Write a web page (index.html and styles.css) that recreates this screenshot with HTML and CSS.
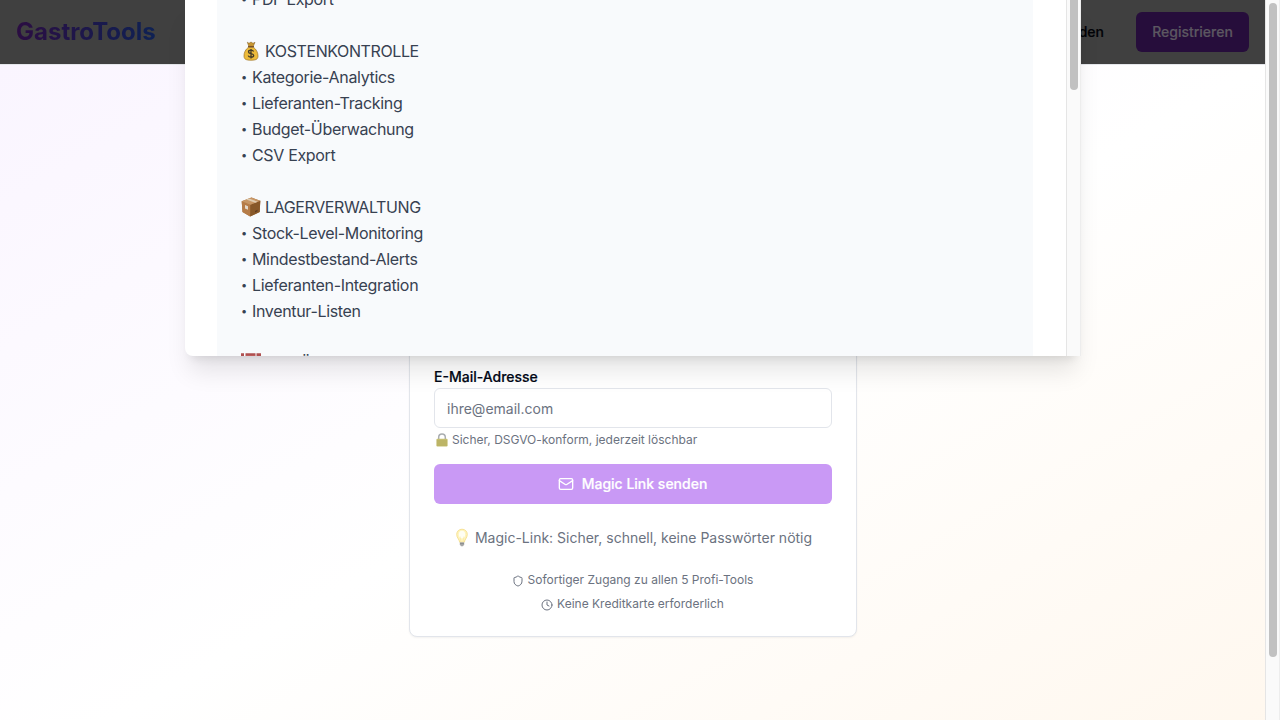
FILE: index.html
```html
<!DOCTYPE html>
<html lang="de">
<head>
<meta charset="utf-8">
<title>GastroTools</title>
<link rel="stylesheet" href="styles.css">
</head>
<body>
<div class="page">
  <header class="topbar">
    <span class="brand">GastroTools</span>
    <nav class="nav"><a class="login">Anmelden</a><a class="register">Registrieren</a></nav>
  </header>
  <main class="main">
    <section class="card">
      <label class="label" for="mail">E-Mail-Adresse</label>
      <input class="field" id="mail" type="email" placeholder="ihre@email.com">
      <p class="hint"><svg class="lock" viewBox="0 0 14 14"><path d="M3.700 7V4.200a3.300 3.300 0 0 1 6.600 0V7" fill="none" stroke="#a9adb0" stroke-width="1.500"/><rect x="1.500" y="5.800" width="11" height="7.800" rx=".8" fill="#c6bf70"/><path d="M1.600 8h10.800M1.600 10h10.800M1.600 12h10.800" stroke="#aaa155" stroke-width=".7"/></svg><span>Sicher, DSGVO-konform, jederzeit löschbar</span></p>
      <button class="send"><svg class="mail" viewBox="0 0 24 24"><rect x="2" y="4" width="20" height="16" rx="2"/><path d="m22 7-8.970 5.700a1.940 1.940 0 0 1-2.060 0L2 7"/></svg>Magic Link senden</button>
      <p class="tip"><svg class="bulb" viewBox="0 0 14 20"><path d="M7 1.200c-3.200 0-5.300 2.300-5.300 5.200 0 3.300 2.400 4.600 3 7.800h4.600c.6-3.200 3-4.500 3-7.800 0-2.900-2.100-5.200-5.300-5.200z" fill="#fff4bc" stroke="#f4dc87" stroke-width=".8"/><ellipse cx="7" cy="6.600" rx="3.200" ry="3.800" fill="#fffef2"/><path d="M5.700 13.500 5.200 8.500M8.300 13.500l.5-5" stroke="#f6e4a0" stroke-width=".5"/><path d="M4.800 14.200h4.400v2.300L8 18.300H6l-1.200-1.800z" fill="#a7a8a8"/><path d="M5 15.600h4" stroke="#787b7d" stroke-width=".6"/></svg><span>Magic-Link: Sicher, schnell, keine Passwörter nötig</span></p>
      <ul class="perks">
        <li><svg class="ico" viewBox="0 0 24 24"><path d="M20 13c0 5-3.500 7.500-7.660 8.950a1 1 0 0 1-.67-.01C7.500 20.500 4 18 4 13V6a1 1 0 0 1 1-1c2 0 4.500-1.200 6.240-2.720a1.170 1.170 0 0 1 1.520 0C14.510 3.810 17 5 19 5a1 1 0 0 1 1 1z"/></svg><span>Sofortiger Zugang zu allen 5 Profi-Tools</span></li>
        <li><svg class="ico" viewBox="0 0 24 24"><circle cx="12" cy="12" r="10"/><path d="M12 6v6l4 2"/></svg><span>Keine Kreditkarte erforderlich</span></li>
      </ul>
    </section>
  </main>
</div>
<div class="scrollbar"><div class="thumb page-thumb"></div></div>
<div class="modal">
  <div class="modal-body">
    <div class="notes">
      <p><span class="dot">•</span>PDF Export</p>
      <p class="section"><svg class="emoji" viewBox="0 0 20 20"><path d="M6.300 1.200 8 2.300 10 1l2 1.300 2-1-1.700 4H7.800z" fill="#c99732" stroke="#80591c" stroke-width=".5"/><path d="M7.500 6.200C4.500 8.200 2.800 12 3 15.200c.2 3.200 2.200 4 7 4s6.900-.8 7-4c.1-3.200-1.600-7-4.600-9z" fill="#edbb3a" stroke="#9e7226" stroke-width=".7"/><path d="M7 5.700h6" stroke="#765022" stroke-width="1.300"/><path d="M12.600 10.500c-.5-1-1.400-1.300-2.600-1.300-1.500 0-2.500.7-2.500 1.700 0 2.400 5.200 1 5.200 3.500 0 1.100-1.200 1.800-2.700 1.800-1.300 0-2.500-.5-2.800-1.600M10 8v9.500" fill="none" stroke="#433a27" stroke-width="1.300"/></svg><span>KOSTENKONTROLLE</span></p>
      <p><span class="dot">•</span>Kategorie-Analytics</p>
      <p><span class="dot">•</span>Lieferanten-Tracking</p>
      <p><span class="dot">•</span>Budget-Überwachung</p>
      <p><span class="dot">•</span>CSV Export</p>
      <p class="section"><svg class="emoji" viewBox="0 0 20 20"><path d="M.7 4.300 10.500.5l8.800 3.200-.6 11.200-9.500 4.600L1.500 15z" fill="#a97445"/><path d="m.7 4.300 8.600 3.400-.1 11.800L1.500 15z" fill="#b67c48"/><path d="m9.300 7.700 10-4-.6 11.200-9.500 4.600z" fill="#885829"/><path d="M.7 4.300 10.500.5l8.800 3.200-10 4z" fill="#c79665"/><path d="m5.200 2.600 9 3.200 2.600-1.100-9-3.100z" fill="#dfcbb0"/><path d="m4 8 3 1.300v3.500L4 11.500z" fill="#e3d9cc"/><path d="m14 14 2.500-1.200v1.500L14 15.500z" fill="#5c3b21"/></svg><span>LAGERVERWALTUNG</span></p>
      <p><span class="dot">•</span>Stock-Level-Monitoring</p>
      <p><span class="dot">•</span>Mindestbestand-Alerts</p>
      <p><span class="dot">•</span>Lieferanten-Integration</p>
      <p><span class="dot">•</span>Inventur-Listen</p>
      <p class="section"><svg class="emoji" viewBox="0 0 20 20"><path d="M0 .2h3V20H0zM4.500.2h10V20h-10zM15.500.2H20V20h-4.500z" fill="#af5050"/><path d="M5 2.500h9v15H5z" fill="#c96a67"/></svg><span>MENÜPLANUNG</span></p>
    </div>
  </div>
  <div class="modal-scroll"><div class="thumb modal-thumb"></div></div>
</div>
</body>
</html>
```
FILE: styles.css
```css
* { box-sizing: border-box; }
body {
  margin: 0;
  width: 1280px;
  height: 720px;
  overflow: hidden;
  display: flex;
  position: relative;
  font-family: Inter, "Liberation Sans", sans-serif;
  -webkit-font-smoothing: antialiased;
}
p, ul { margin: 0; padding: 0; list-style: none; }
svg { flex: none; display: block; }
.page {
  width: 1265px;
  height: 720px;
  display: flex;
  flex-direction: column;
  background: linear-gradient(to bottom right, #faf5ff, #ffffff 50%, #fff7ed) 0 65px / 100% 720px no-repeat;
}
.topbar {
  height: 64px;
  flex: none;
  padding: 0 16px;
  display: flex;
  align-items: center;
  justify-content: space-between;
  background: #404040;
  box-shadow: 0 1px 0 #e5e7eb;
}
.brand {
  font-size: 24px;
  line-height: 32px;
  font-weight: 700;
  color: transparent;
  background: linear-gradient(to right, #2b0d42, #0e2153);
  background-clip: text;
  -webkit-background-clip: text;
}
.nav { display: flex; align-items: center; gap: 32px; font-size: 14px; line-height: 20px; font-weight: 500; }
.login, .register, .label, .send { -webkit-text-stroke: .2px currentColor; }
.login { color: #020307; padding-bottom: 1px; }
.register {
  height: 40px;
  width: 113px;
  padding-bottom: 1px;
  border-radius: 6px;
  display: flex;
  align-items: center;
  justify-content: center;
  background: #260d3b;
  color: #5c5761;
}
.main { flex: 1; display: flex; justify-content: center; align-items: flex-start; }
.card {
  width: 448px;
  height: 573px;
  margin-left: 1px;
  padding: 302px 24px 0;
  border: 1px solid #e2e5eb;
  border-radius: 8px;
  background: #fff;
  box-shadow: 0 1px 2px rgba(0, 0, 0, .05);
  color: #64748b;
}
.label { display: block; margin-bottom: 1px; font-size: 14px; line-height: 20px; font-weight: 500; color: #020817; }
.field {
  display: block;
  width: 100%;
  height: 40px;
  padding: 0 12px;
  border: 1px solid #e2e5eb;
  border-radius: 6px;
  background: #fff;
  font: 14px/20px Inter, sans-serif;
}
.field::placeholder { color: #6b7280; opacity: 1; }
.hint { display: flex; align-items: center; gap: 3px; margin-top: 4px; padding-left: 1px; font-size: 12px; line-height: 16px; color: #6b7280; }
.lock { width: 14px; height: 14px; }
.send {
  width: 100%;
  height: 40px;
  margin-top: 16px;
  padding: 0 1px 0 0;
  border: 0;
  border-radius: 6px;
  display: flex;
  align-items: center;
  justify-content: center;
  gap: 8px;
  background: #c999f5;
  color: #fff;
  font: 500 14px/20px Inter, sans-serif;
}
.mail, .ico { fill: none; stroke: currentColor; stroke-width: 2; stroke-linecap: round; stroke-linejoin: round; }
.mail { width: 16px; height: 16px; }
.tip { display: flex; align-items: center; justify-content: center; gap: 6px; margin-top: 24px; padding-left: 1px; font-size: 14px; line-height: 20px; color: #6b7280; }
.bulb { width: 14px; height: 20px; }
.perks { margin-top: 24px; display: flex; flex-direction: column; gap: 8px; font-size: 12px; line-height: 16px; color: #6b7280; }
.perks li { display: flex; align-items: center; justify-content: center; gap: 4px; padding-right: 1px; }
.ico { width: 12px; height: 12px; margin-top: 2px; }
.scrollbar { width: 15px; height: 720px; padding: 3px 0 0 3px; border-left: 1px solid #e5e5e5; border-right: 1px solid #ededed; background: #fafafa; }
.thumb { width: 8px; border-radius: 4px; background: #c1c1c1; }
.page-thumb { height: 654px; }
.modal {
  position: absolute;
  left: 185px;
  top: 0;
  width: 896px;
  height: 356px;
  display: flex;
  overflow: hidden;
  background: #fff;
  border-radius: 0 0 0 8px;
  box-shadow: 0 20px 25px -5px rgba(0, 0, 0, .1), 0 8px 10px -6px rgba(0, 0, 0, .1);
}
.modal-body { flex: 1; padding: 0 33px 0 32px; overflow: hidden; }
.notes {
  margin-top: -14px;
  padding-left: 24px;
  background: #f8fafc;
  color: #374151;
  font-size: 16px;
  line-height: 26px;
  letter-spacing: -.33px;
}
.notes p { display: flex; height: 26px; }
.dot { width: 11px; font-size: 11px; line-height: 27px; }
.notes .section { align-items: center; gap: 4px; margin-top: 26px; letter-spacing: -.4px; }
.emoji { width: 20px; height: 20px; }
.modal-scroll { width: 15px; padding-left: 3px; border-left: 1px solid #e5e5e5; border-right: 1px solid #ededed; background: #fafafa; }
.modal-thumb { height: 90px; border-radius: 0 0 4px 4px; }
```
